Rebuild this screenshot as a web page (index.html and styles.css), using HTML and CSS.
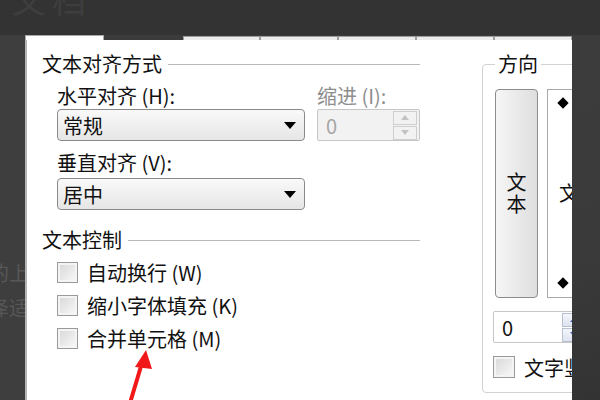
FILE: index.html
```html
<!DOCTYPE html>
<html lang="zh-CN">
<head>
    <meta charset="UTF-8">
    <meta name="viewport" content="width=device-width, initial-scale=1.0">
    <title>设置单元格格式</title>
    <link rel="stylesheet" href="styles.css">
</head>
<body>
    <div class="topbar"><span class="ghost">文档</span></div>
    <div class="main">
        <div class="side left">
            <span class="ghost-line first">的上</span>
            <span class="ghost-line">泽适</span>
        </div>
        <div class="dialog">
            <div class="tabs">
                <div class="tab active"></div>
                <div class="tab-gap"></div>
                <div class="tab"></div>
                <div class="tab"></div>
                <div class="tab"></div>
                <div class="tab"></div>
                <div class="tab"></div>
            </div>
            <div class="sheet">
                <div class="col-left">
                    <div class="legend">文本对齐方式</div>
                    <div class="fields">
                        <div class="align-row">
                            <div class="field wide">
                                <div class="label">水平对齐 (H):</div>
                                <div class="select">常规<i class="caret"></i></div>
                            </div>
                            <div class="field narrow">
                                <div class="label dim">缩进 (I):</div>
                                <div class="spin disabled">
                                    <span>0</span>
                                    <div class="spin-btns">
                                        <b class="up"></b>
                                        <b class="down"></b>
                                    </div>
                                </div>
                            </div>
                        </div>
                        <div class="field wide second">
                            <div class="label">垂直对齐 (V):</div>
                            <div class="select">居中<i class="caret"></i></div>
                        </div>
                    </div>
                    <div class="legend second">文本控制</div>
                    <div class="checks">
                        <div class="check"><span class="box"></span>自动换行 (W)</div>
                        <div class="check"><span class="box"></span>缩小字体填充 (K)</div>
                        <div class="check"><span class="box"></span>合并单元格 (M)</div>
                    </div>
                </div>
                <div class="group">
                    <div class="group-title">方向</div>
                    <div class="orient">
                        <div class="vbtn">文本</div>
                        <div class="obox">
                            <span class="diamond"></span>
                            <span class="otext">文</span>
                            <span class="diamond"></span>
                        </div>
                    </div>
                    <div class="spin blue">
                        <span>0</span>
                        <div class="spin-btns">
                            <b class="up"></b>
                            <b class="down"></b>
                        </div>
                    </div>
                    <div class="check small"><span class="box"></span>文字竖排</div>
                </div>
            </div>
        </div>
        <div class="side right"></div>
    </div>
    <svg class="arrow" width="60" height="60" viewBox="0 0 60 60">
        <line x1="20" y1="62" x2="32" y2="22" stroke="#f01818" stroke-width="4"/>
        <polygon points="36,9 25,26 42,28" fill="#f01818"/>
    </svg>
</body>
</html>
```

FILE: styles.css
```css
body {
    margin: 0;
    width: 600px;
    height: 400px;
    overflow: hidden;
    position: relative;
    background: #3b3b3b;
    font-family: "Noto Sans CJK SC", "DejaVu Sans", sans-serif;
    color: #111;
}
.topbar {
    height: 35px;
    background: #333333;
    overflow: hidden;
    padding-left: 12px;
}
.ghost {
    display: block;
    margin-top: -26px;
    font-size: 34px;
    color: #3e3e3e;
    letter-spacing: 6px;
}
.main {
    display: flex;
    height: 365px;
}
.side.left {
    width: 25px;
    background: #3e3e3e;
    display: flex;
    flex-direction: column;
    align-items: flex-end;
    overflow: hidden;
}
.ghost-line {
    font-size: 20px;
    line-height: 24px;
    color: #575757;
    white-space: nowrap;
    margin-right: -4px;
}
.ghost-line.first {
    margin-top: 226px;
    margin-bottom: 11px;
}
.side.right {
    flex: 1;
    background: linear-gradient(160deg, #3c3c3c 0%, #3a3a3a 60%, #333 100%);
}
.dialog {
    width: 547px;
    display: flex;
    flex-direction: column;
    overflow: hidden;
}
.tabs {
    height: 5px;
    display: flex;
    align-items: flex-end;
}
.tab {
    width: 81px;
    height: 3px;
    background: #ececec;
    border: 1px solid #9c9c9c;
    border-bottom: none;
}
.tab.active {
    width: 82px;
    height: 4px;
    background: #fff;
    border-color: #a8a8a8;
}
.tab-gap {
    width: 84px;
}
.sheet {
    flex: 1;
    display: flex;
    background: #fff;
    border-left: 2px solid #b4b4b4;
    padding-left: 15px;
    overflow: hidden;
}
.col-left {
    width: 378px;
    flex-shrink: 0;
    margin-top: 12px;
}
.legend {
    height: 24px;
    display: flex;
    align-items: center;
    font-size: 20px;
    line-height: 24px;
}
.legend::after {
    content: "";
    flex: 1;
    height: 1px;
    background: #b9b9b9;
    margin-left: 6px;
}
.legend.second {
    margin-top: 18px;
}
.fields {
    padding-left: 15px;
}
.align-row {
    display: flex;
    gap: 12px;
    margin-top: 9px;
}
.field.wide {
    width: 248px;
}
.field.narrow {
    width: 103px;
}
.field.second {
    margin-top: 11px;
}
.label {
    height: 22px;
    line-height: 22px;
    font-size: 20px;
    margin-bottom: 2px;
    white-space: nowrap;
}
.field.second .label {
    margin-bottom: 4px;
}
.label.dim {
    color: #8e8e8e;
}
.select {
    height: 30px;
    border: 1px solid #8a8a8a;
    border-radius: 4px;
    background: linear-gradient(#f9f9f9, #e6e6e6);
    display: flex;
    align-items: center;
    justify-content: space-between;
    padding: 0 8px 0 5px;
    font-size: 20px;
}
.caret {
    width: 0;
    height: 0;
    border-left: 6px solid transparent;
    border-right: 6px solid transparent;
    border-top: 7px solid #000;
}
.spin {
    height: 30px;
    border: 1px solid #c6c6c6;
    border-radius: 2px;
    display: flex;
    align-items: center;
    justify-content: space-between;
    padding: 0 2px 0 8px;
    font-size: 20px;
}
.spin.disabled {
    background: #f2f2f2;
    color: #a6a6a6;
}
.spin-btns {
    display: flex;
    flex-direction: column;
    gap: 1px;
}
.spin-btns b {
    width: 22px;
    height: 12px;
    border: 1px solid #cfcfcf;
    background: #f2f2f2;
    display: flex;
    align-items: center;
    justify-content: center;
}
.spin-btns b::before {
    content: "";
    border-left: 4px solid transparent;
    border-right: 4px solid transparent;
}
.spin-btns .up::before {
    border-bottom: 5px solid #c2c2c2;
}
.spin-btns .down::before {
    border-top: 5px solid #c2c2c2;
}
.checks {
    padding-left: 15px;
    margin-top: 4px;
}
.check {
    height: 33px;
    display: flex;
    align-items: center;
    font-size: 20px;
    white-space: nowrap;
}
.box {
    width: 19px;
    height: 19px;
    border: 1px solid #9a9a9a;
    background: linear-gradient(135deg, #d6d6d6, #fafafa);
    box-shadow: inset 0 0 0 2px #f4f4f4;
    margin-right: 9px;
    flex-shrink: 0;
}
.group {
    flex-shrink: 0;
    width: 130px;
    height: 327px;
    margin-left: 62px;
    margin-top: 24px;
    border: 1px solid #d2d2d2;
    border-radius: 4px;
    padding-left: 12px;
}
.group-title {
    width: max-content;
    height: 24px;
    line-height: 24px;
    margin-top: -13px;
    padding: 0 3px;
    background: #fff;
    font-size: 20px;
}
.orient {
    display: flex;
    gap: 9px;
    height: 209px;
    margin-top: 13px;
}
.vbtn {
    width: 41px;
    border: 1px solid #8c8c8c;
    border-radius: 4px;
    background: linear-gradient(90deg, #f6f6f6, #dedede);
    writing-mode: vertical-rl;
    display: flex;
    align-items: center;
    justify-content: center;
    font-size: 20px;
    letter-spacing: 2px;
}
.obox {
    width: 70px;
    border: 1px solid #a9a9a9;
    background: #fff;
    display: flex;
    flex-direction: column;
    justify-content: space-between;
    align-items: flex-start;
    padding: 9px 0 10px 11px;
}
.diamond {
    width: 8px;
    height: 8px;
    background: #000;
    transform: rotate(45deg);
}
.otext {
    font-size: 20px;
    line-height: 24px;
}
.spin.blue {
    width: 96px;
    margin: 13px 0 0 -2px;
    background: #fff;
    color: #111;
    padding-right: 0;
}
.spin.blue .spin-btns {
    margin-right: 12px;
}
.spin.blue .spin-btns b {
    background: linear-gradient(#f4f6fb, #dde3f0);
    border-color: #b8bfcf;
}
.spin.blue .up::before {
    border-bottom-color: #4a6bc4;
}
.spin.blue .down::before {
    border-top-color: #4a6bc4;
}
.check.small {
    margin: 12px 0 0 -2px;
    height: 24px;
}
.check.small .box {
    width: 20px;
    height: 20px;
}
.arrow {
    position: absolute;
    left: 110px;
    top: 341px;
}
```
